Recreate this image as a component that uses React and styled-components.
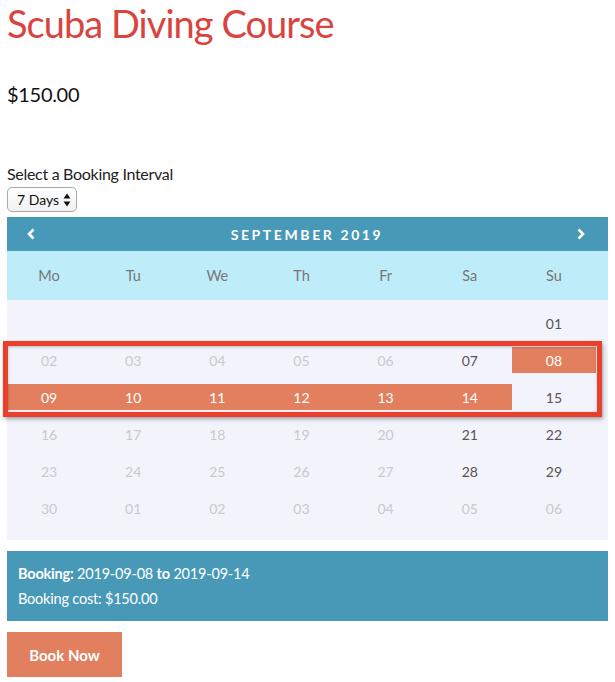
import React from "react";
import styled, { createGlobalStyle } from "styled-components";

const Global = createGlobalStyle`
  html, body { margin: 0; padding: 0; background: #fff; }
  body { font-family: Lato, "Open Sans", sans-serif; color: #111; }
  * { box-sizing: border-box; }
`;

const Page = styled.div`
  width: 615px;
  padding: 0 7px;
`;

const Title = styled.h1`
  margin: 0;
  font-size: 38px;
  line-height: 46px;
  font-weight: 400;
  color: #d9443f;
  letter-spacing: -0.95px;
`;

const Price = styled.p`
  margin: 33px 0 0;
  font-size: 20px;
  line-height: 30px;
  color: #111;
  letter-spacing: -0.3px;
`;

const Label = styled.label`
  display: block;
  margin-top: 55px;
  font-size: 16px;
  line-height: 20px;
  color: #222;
  letter-spacing: -0.3px;
`;

const SelectBox = styled.div`
  margin-top: 3px;
  width: 70px;
  height: 25px;
  border: 1px solid #a9a9a9;
  border-radius: 5px;
  background: linear-gradient(#fefefe, #f1f1f1);
  display: flex;
  align-items: center;
  justify-content: space-between;
  padding: 0 5px 0 9px;
  font-size: 14px;
  white-space: nowrap;
  color: #111;
`;

const Calendar = styled.div`
  position: relative;
  margin-top: 5px;
`;

const Header = styled.div`
  height: 34px;
  background: #4799b7;
  display: flex;
  align-items: center;
  justify-content: space-between;
  padding: 0 23px 0 20px;
  color: #fff;
`;

const MonthTitle = styled.span`
  font-size: 14px;
  font-weight: 700;
  letter-spacing: 2.6px;
  padding-left: 2px;
`;

const Arrow = styled.svg`
  display: block;
  width: 8px;
  height: 12px;
`;

const DaysRow = styled.div`
  height: 49px;
  background: #beecf8;
  display: grid;
  grid-template-columns: repeat(7, 1fr);
  align-items: center;
  padding-right: 12px;
`;

const DayName = styled.div`
  text-align: center;
  font-size: 14.5px;
  color: #777;
`;

const Body = styled.div`
  height: 240px;
  background: #f3f3fc;
  padding: 10px 12px 0 0;
  display: grid;
  grid-template-columns: repeat(7, 1fr);
  grid-auto-rows: 26px;
  row-gap: 11.2px;
`;

const Cell = styled.div`
  display: flex;
  align-items: center;
  justify-content: center;
  font-size: 14px;
  color: ${(p) =>
    p.$state === "selected" ? "#fff" : p.$state === "available" ? "#555" : "#c9c9cc"};
  background: ${(p) => (p.$state === "selected" ? "#e17f5f" : "transparent")};
`;

const Highlight = styled.div`
  position: absolute;
  left: -4px;
  top: 124px;
  width: 599px;
  height: 76px;
  border: 5px solid #e8402a;
  box-shadow: 1px 2px 4px rgba(0, 0, 0, 0.35), inset 0 1px 3px rgba(0, 0, 0, 0.25);
  pointer-events: none;
`;

const Summary = styled.div`
  margin-top: 11px;
  background: #4799b7;
  color: #fff;
  padding: 10px 11px;
  font-size: 14.5px;
  line-height: 25px;
  letter-spacing: -0.2px;
`;

const BookButton = styled.button`
  margin-top: 11px;
  width: 115px;
  height: 45px;
  border: none;
  background: #e17f5f;
  color: #fff;
  font-family: inherit;
  font-size: 15px;
  font-weight: 700;
  padding: 0;
  cursor: pointer;
`;

const dayNames = ["Mo", "Tu", "We", "Th", "Fr", "Sa", "Su"];

const pad = (n) => String(n).padStart(2, "0");

function buildCells() {
  const cells = [];
  for (let i = 0; i < 6; i++) cells.push({ label: "", state: "empty" });
  for (let d = 1; d <= 30; d++) {
    const col = cells.length % 7;
    let state = col >= 5 ? "available" : "disabled";
    if (d >= 8 && d <= 14) state = "selected";
    cells.push({ label: pad(d), state });
  }
  for (let d = 1; d <= 6; d++) cells.push({ label: pad(d), state: "disabled" });
  return cells;
}

export default function App() {
  const cells = buildCells();
  return (
    <Page>
      <Global />
      <Title>Scuba Diving Course</Title>
      <Price>$150.00</Price>
      <Label>Select a Booking Interval</Label>
      <SelectBox>
        <span>7 Days</span>
        <svg width="8" height="14" viewBox="0 0 8 14">
          <path d="M4 0.5 L7.5 5.5 L0.5 5.5 Z" fill="#111" />
          <path d="M4 13.5 L7.5 8.5 L0.5 8.5 Z" fill="#111" />
        </svg>
      </SelectBox>
      <Calendar>
        <Header>
          <Arrow viewBox="0 0 8 12">
            <polyline points="6.5,1.5 2,6 6.5,10.5" fill="none" stroke="#fff" strokeWidth="2.6" />
          </Arrow>
          <MonthTitle>SEPTEMBER 2019</MonthTitle>
          <Arrow viewBox="0 0 8 12">
            <polyline points="1.5,1.5 6,6 1.5,10.5" fill="none" stroke="#fff" strokeWidth="2.6" />
          </Arrow>
        </Header>
        <DaysRow>
          {dayNames.map((n) => (
            <DayName key={n}>{n}</DayName>
          ))}
        </DaysRow>
        <Body>
          {cells.map((c, i) => (
            <Cell key={i} $state={c.state}>
              {c.label}
            </Cell>
          ))}
        </Body>
        <Highlight />
      </Calendar>
      <Summary>
        <div>
          <strong>Booking:</strong> 2019-09-08 <strong>to</strong> 2019-09-14
        </div>
        <div>Booking cost: $150.00</div>
      </Summary>
      <BookButton>Book Now</BookButton>
    </Page>
  );
}
